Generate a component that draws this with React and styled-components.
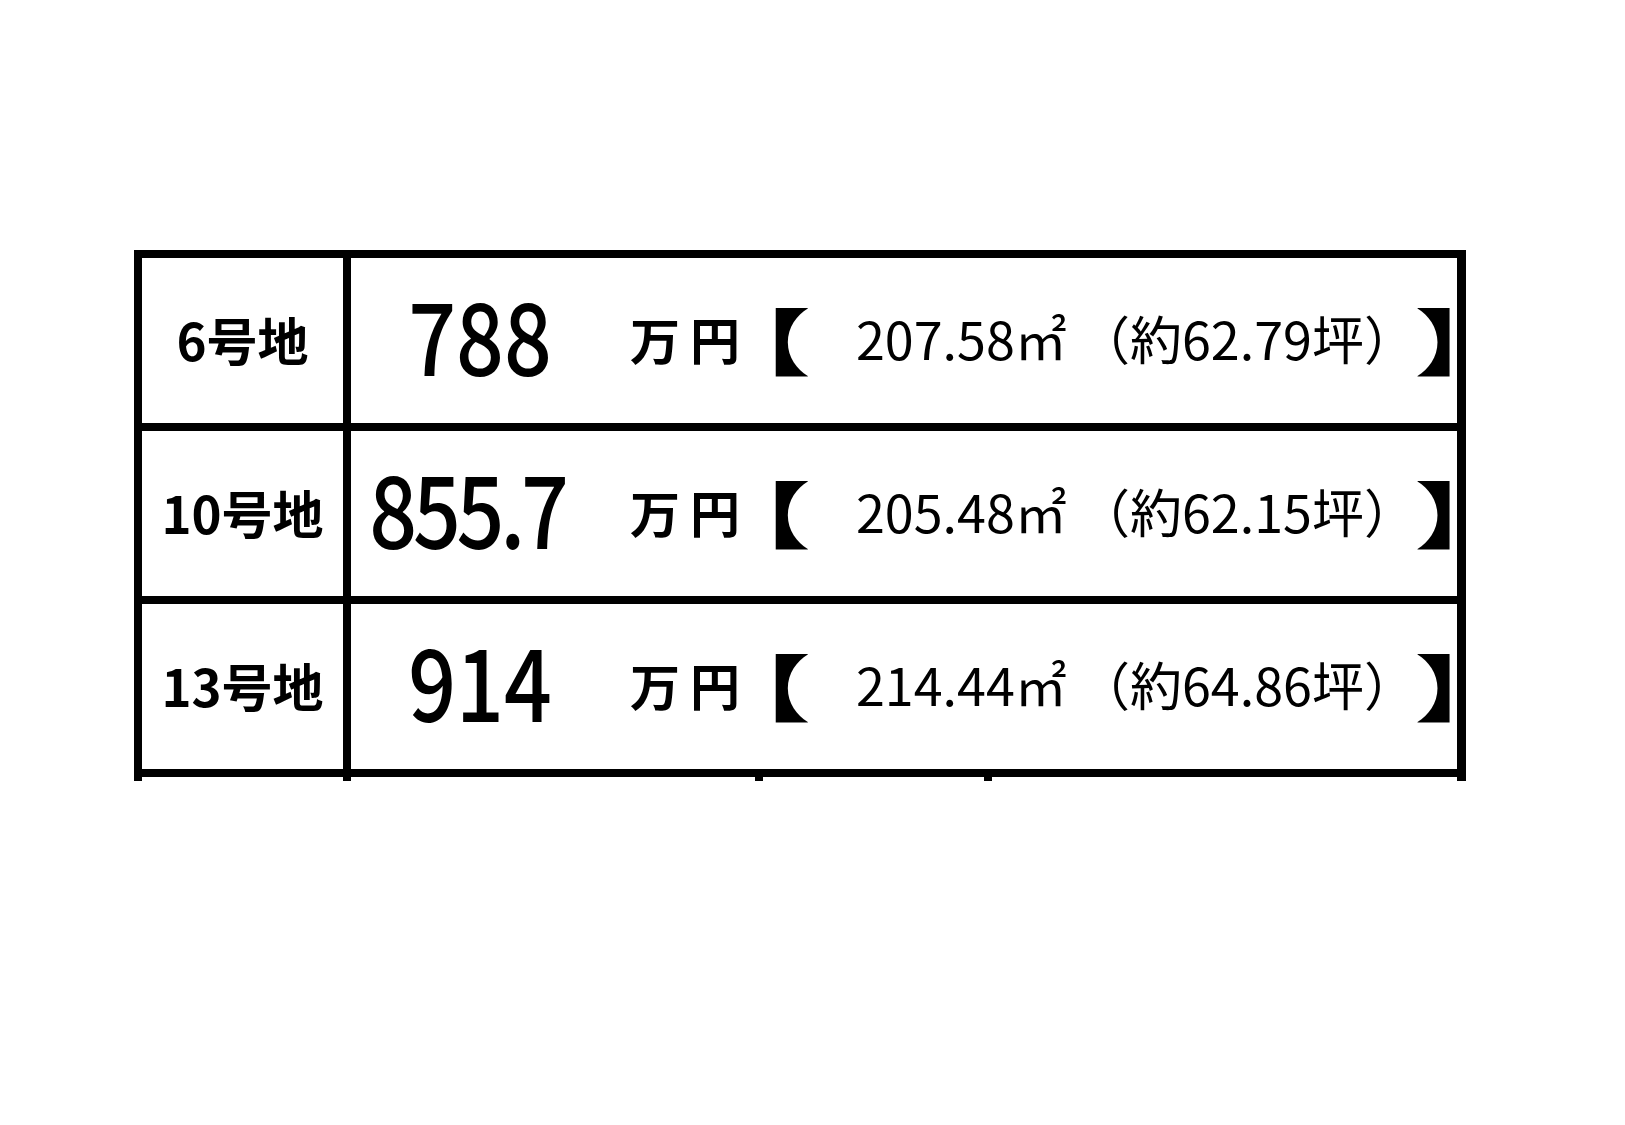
import styled, { createGlobalStyle } from "styled-components";

const GlobalStyle = createGlobalStyle`
  html, body {
    margin: 0;
    padding: 0;
    background: #fff;
  }
  body {
    font-family: "Noto Sans CJK JP", "Noto Sans", sans-serif;
    color: #000;
  }
`;

const Page = styled.div`
  width: 1625px;
  height: 1125px;
  background: #fff;
  overflow: hidden;
`;

const Sheet = styled.div`
  margin: 250px 0 0 134px;
  width: 1332px;
  box-sizing: border-box;
  border: solid #000;
  border-width: 8px 9px 0 8px;
`;

const Row = styled.div`
  display: grid;
  grid-template-columns: 209px 1fr;
  height: 173px;
  box-sizing: border-box;
  border-bottom: 8px solid #000;
`;

const TailRow = styled.div`
  display: grid;
  grid-template-columns: 209px 412px 229px 1fr;
  height: 4px;
`;

const TailCell = styled.div`
  box-sizing: border-box;
  border-right: ${(p) => (p.$edge ? "8px solid #000" : "none")};
`;

const Label = styled.div`
  box-sizing: border-box;
  border-right: 8px solid #000;
  display: flex;
  align-items: center;
  justify-content: center;
  padding-bottom: 4px;
  font-size: 51px;
  font-weight: 700;
`;

const Body = styled.div`
  display: grid;
  grid-template-columns: 258px 161px 70px 255px 315px 1fr;
  align-items: center;
  padding-bottom: 6px;
`;

const Price = styled.div`
  text-align: center;
  font-size: 100px;
  font-weight: 500;
  line-height: 1;
  letter-spacing: ${(p) => (p.$tight ? "-5px" : "0")};
  transform: translateX(${(p) => p.$nudge || 0}px) scaleX(0.84);
  margin-top: -10px;
`;

const Unit = styled.div`
  padding-left: 21px;
  font-size: 50px;
  font-weight: 700;
  letter-spacing: 10px;
`;

const Bracket = styled.div`
  justify-self: start;
  font-size: 72px;
  font-weight: 900;
  line-height: 1;
  font-feature-settings: "halt";
  margin-left: ${(p) => p.$shift}px;
  transform: scaleX(1.4);
  transform-origin: left center;
`;

const Area = styled.div`
  padding-left: 16px;
  font-size: 52px;
  font-weight: 400;
  white-space: nowrap;
`;

const Tsubo = styled.div`
  font-size: 52px;
  font-weight: 400;
  white-space: nowrap;
  margin-left: -17px;
`;

const lots = [
  { name: "6号地", price: "788", area: "207.58㎡", tsubo: "（約62.79坪）" },
  { name: "10号地", price: "855.7", nudge: -13, area: "205.48㎡", tsubo: "（約62.15坪）" },
  { name: "13号地", price: "914", area: "214.44㎡", tsubo: "（約64.86坪）" },
];

export default function App() {
  return (
    <Page>
      <GlobalStyle />
      <Sheet>
        {lots.map((lot) => (
          <Row key={lot.name}>
            <Label>{lot.name}</Label>
            <Body>
              <Price $nudge={lot.nudge} $tight={lot.price.includes(".")}>
                {lot.price}
              </Price>
              <Unit>万円</Unit>
              <Bracket $shift={-10}>【</Bracket>
              <Area>{lot.area}</Area>
              <Tsubo>{lot.tsubo}</Tsubo>
              <Bracket $shift={5}>】</Bracket>
            </Body>
          </Row>
        ))}
        <TailRow>
          <TailCell $edge />
          <TailCell $edge />
          <TailCell $edge />
          <TailCell />
        </TailRow>
      </Sheet>
    </Page>
  );
}
